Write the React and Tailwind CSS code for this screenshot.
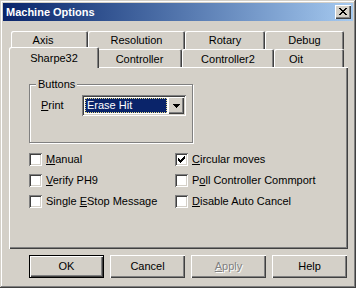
import { useState } from "react";

const X_GLYPH =
  "M0 0h2v1h-2zM6 0h2v1h-2zM1 1h2v1h-2zM5 1h2v1h-2zM2 2h4v1h-4zM3 3h2v1h-2zM2 4h4v1h-4zM1 5h2v1h-2zM5 5h2v1h-2zM0 6h2v1h-2zM6 6h2v1h-2z";
const CHECK_GLYPH =
  "M6 0h1v1h-1zM5 1h2v1h-2zM0 2h1v1h-1zM4 2h3v1h-3zM0 3h2v1h-2zM3 3h3v1h-3zM0 4h5v1h-5zM1 5h3v1h-3zM2 6h1v1h-1z";
const ARROW_GLYPH = "M0 0h7v1h-7zM1 1h5v1h-5zM2 2h3v1h-3zM3 3h1v1h-1z";

function Tab({ label, width, selected, className = "" }) {
  if (selected) {
    return (
      <div
        className={`relative z-10 -mx-[2px] -mt-[2px] h-[21px] shrink-0 flex justify-center pt-[3px] bg-[#d4d0c8] rounded-t-[2px] shadow-[inset_1px_1px_0_#fff,inset_-1px_0_0_#404040,inset_-2px_0_0_#808080] ${className}`}
        style={{ width: width + 4 }}
      >
        {label}
      </div>
    );
  }
  return (
    <div
      className={`h-[18px] shrink-0 flex items-center justify-center rounded-t-[2px] shadow-[inset_1px_1px_0_#fff,inset_-1px_0_0_#404040,inset_-2px_0_0_#808080] ${className}`}
      style={{ width }}
    >
      {label}
    </div>
  );
}

function Check({ checked, children }) {
  return (
    <div className="flex items-center gap-[4px] h-[13px]">
      <div className="w-[13px] h-[13px] bg-white p-[3px] shadow-[inset_1px_1px_0_#808080,inset_-1px_-1px_0_#fff,inset_2px_2px_0_#404040,inset_-2px_-2px_0_#d4d0c8]">
        {checked && (
          <svg width="7" height="7" viewBox="0 0 7 7" shapeRendering="crispEdges">
            <path d={CHECK_GLYPH} fill="#000" />
          </svg>
        )}
      </div>
      <span className="leading-[13px] whitespace-nowrap">{children}</span>
    </div>
  );
}

function Button({ children, isDefault, disabled }) {
  const face = (
    <div
      className={`w-full h-full flex items-center justify-center shadow-[inset_1px_1px_0_#fff,inset_-1px_-1px_0_#404040,inset_-2px_-2px_0_#808080] ${
        disabled ? "text-[#808080] [text-shadow:1px_1px_0_#fff]" : ""
      }`}
    >
      {children}
    </div>
  );
  return (
    <button
      className={`w-[75px] h-[23px] bg-[#d4d0c8] ${isDefault ? "border border-black" : ""}`}
    >
      {face}
    </button>
  );
}

export default function App() {
  const [checks, setChecks] = useState({ circular: true });

  return (
    <div className="w-[356px] h-[288px] bg-[#d4d0c8] p-[3px] flex flex-col text-[11px] text-black font-['Liberation_Sans',Arial,sans-serif] shadow-[inset_-1px_-1px_0_#404040,inset_1px_1px_0_#d4d0c8,inset_-2px_-2px_0_#808080,inset_2px_2px_0_#fff]">
      {/* title bar */}
      <div className="h-[18px] flex items-center justify-between pl-[3px] pr-[2px] bg-linear-to-r from-[#0a246a] to-[#a6caf0]">
        <span className="text-white font-bold">Machine Options</span>
        <div className="w-[16px] h-[14px] bg-[#d4d0c8] flex items-center justify-center pb-[1px] pr-[1px] shadow-[inset_1px_1px_0_#fff,inset_-1px_-1px_0_#404040,inset_-2px_-2px_0_#808080]">
          <svg width="8" height="7" viewBox="0 0 8 7" shapeRendering="crispEdges">
            <path d={X_GLYPH} fill="#000" />
          </svg>
        </div>
      </div>

      {/* tab control */}
      <div className="ml-[6px] mt-[10px] w-[339px] flex flex-col">
        <div className="flex pl-[2px]">
          <Tab label="Axis" width={77} className="pr-[13px]" />
          <Tab label="Resolution" width={97} />
          <Tab label="Rotary" width={80} />
          <Tab label="Debug" width={79} />
        </div>
        <div className="flex items-start pl-[2px] h-[18px] mt-[0px]">
          <Tab label="Sharpe32" width={86} selected />
          <Tab label="Controller" width={85} className="pt-[2px]" />
          <Tab label="Controller2" width={92} className="pt-[2px]" />
          <Tab label="Oit" width={70} className="pr-[26px] pt-[2px]" />
        </div>

        <div className="h-[182px] pl-[20px] pt-[17px] shadow-[inset_1px_1px_0_#fff,inset_-1px_-1px_0_#404040,inset_-2px_-2px_0_#808080]">
          {/* Buttons group */}
          <div className="relative w-[164px] h-[59px] border border-[#808080] shadow-[inset_1px_1px_0_#fff,1px_1px_0_#fff] flex items-start pl-[11px] pt-[10px]">
            <span className="absolute -top-[7px] left-[6px] px-[2px] bg-[#d4d0c8] leading-[13px]">
              Buttons
            </span>
            <div className="flex items-center">
              <span className="w-[41px]">
                <span className="underline">P</span>rint
              </span>
              <div className="w-[104px] h-[21px] bg-white p-[2px] flex shadow-[inset_1px_1px_0_#808080,inset_-1px_-1px_0_#fff,inset_2px_2px_0_#404040,inset_-2px_-2px_0_#d4d0c8]">
                <div className="flex-1 p-[1px]">
                  <div className="h-full bg-[#0a246a] text-white border border-dotted border-[#e8dc8c] pl-[1px] leading-[13px]">
                    Erase Hit
                  </div>
                </div>
                <div className="w-[16px] h-full bg-[#d4d0c8] flex items-center justify-center shadow-[inset_1px_1px_0_#fff,inset_-1px_-1px_0_#404040,inset_-2px_-2px_0_#808080]">
                  <svg width="7" height="4" viewBox="0 0 7 4" shapeRendering="crispEdges">
                    <path d={ARROW_GLYPH} fill="#000" />
                  </svg>
                </div>
              </div>
            </div>
          </div>

          {/* checkboxes */}
          <div className="mt-[10px] grid grid-cols-[146px_auto] gap-y-[8px]">
            <Check checked={checks.manual}>
              <span className="underline">M</span>anual
            </Check>
            <Check checked={checks.circular}>
              <span className="underline">C</span>ircular moves
            </Check>
            <Check checked={checks.verify}>
              <span className="underline">V</span>erify PH9
            </Check>
            <Check checked={checks.poll}>
              P<span className="underline">o</span>ll Controller Commport
            </Check>
            <Check checked={checks.estop}>
              Single <span className="underline">E</span>Stop Message
            </Check>
            <Check checked={checks.disable}>
              <span className="underline">D</span>isable Auto Cancel
            </Check>
          </div>
        </div>
      </div>

      {/* dialog buttons */}
      <div className="mt-[6px] ml-[26px] flex gap-[6px]">
        <Button isDefault>OK</Button>
        <Button>Cancel</Button>
        <Button disabled>
          <span className="underline">A</span>pply
        </Button>
        <Button>Help</Button>
      </div>
    </div>
  );
}
